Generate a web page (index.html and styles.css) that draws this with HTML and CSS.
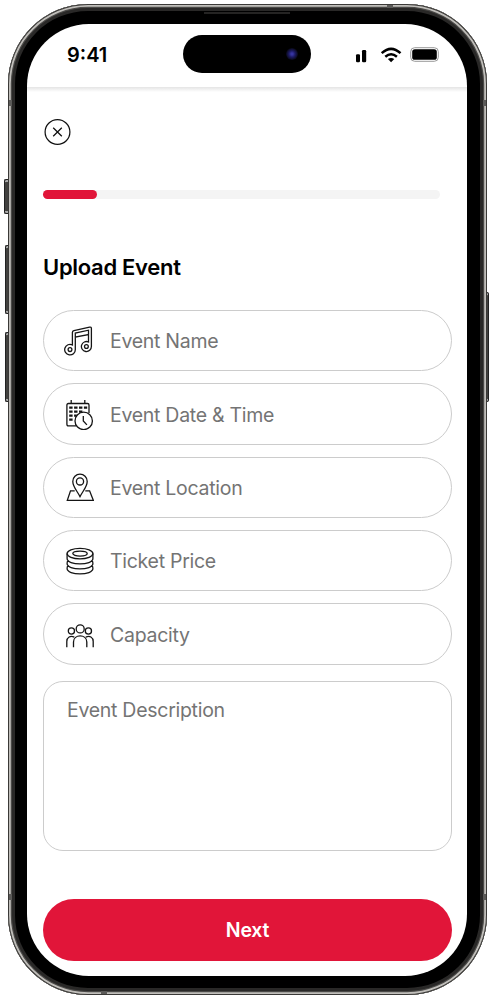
FILE: index.html
```html
<!DOCTYPE html>
<html lang="en">
<head>
<meta charset="utf-8">
<title>Upload Event</title>
<link rel="stylesheet" href="styles.css">
</head>
<body>
<div class="phone">
  <span class="key key-action"></span>
  <span class="key key-up"></span>
  <span class="key key-down"></span>
  <span class="key key-power"></span>
  <div class="frame">
    <span class="speaker"></span>
    <span class="band band-top"></span>
    <span class="band band-bottom"></span>
    <span class="band band-left-top"></span>
    <span class="band band-right-top"></span>
    <span class="band band-left-bottom"></span>
    <span class="band band-right-bottom"></span>
    <div class="screen">
      <header class="status">
        <span class="time">9:41</span>
        <div class="island"><span class="camera"></span></div>
        <svg class="indicators" width="90" height="20" viewBox="0 0 90 20">
          <rect x="3" y="9.2" width="4" height="8" rx="1.2"/>
          <rect x="9" y="5" width="4.2" height="12.2" rx="1.2"/>
          <g fill="none" stroke="#000" stroke-width="2.5">
            <path d="M28.7 8.2Q38.1 -.4 47.5 8.2"/>
            <path d="M32.3 11.7Q38.1 6.7 43.9 11.7"/>
          </g>
          <path d="M34.9 14.1Q38.1 11.7 41.3 14.1L38.1 17.3Z"/>
          <rect x="57.7" y="2.7" width="27.6" height="13.6" rx="4" fill="none" stroke="#999"/>
          <rect x="59.2" y="4.2" width="24.6" height="10.6" rx="2.6"/>
        </svg>
      </header>
      <main class="content">
        <button class="close" aria-label="Close">
          <svg width="28" height="28" viewBox="0 0 28 28"><circle cx="14.5" cy="14" r="12.4"/><path d="M10.2 9.7l8.6 8.6M18.8 9.7l-8.6 8.6"/></svg>
        </button>
        <div class="progress"><div class="progress-value"></div></div>
        <h1 class="title">Upload Event</h1>
        <div class="fields">
          <div class="field">
            <svg class="icon" viewBox="0 0 30 30"><path d="M8.4 18.9V6.5Q8.4 5 9.9 4.7L25.6 1.2Q27.4.8 27.4 2.6V20.5a5 5 0 1 1-2.9-4.5V8.5L11.3 11V23.6a5.3 5.3 0 1 1-2.9-4.7ZM11.3 11V7L24.5 4.2V8.5"/><circle cx="6" cy="23.6" r="1.9"/><circle cx="22.4" cy="20.5" r="1.9"/></svg>
            <span>Event Name</span>
          </div>
          <div class="field">
            <svg class="icon" viewBox="0 0 30 30"><path d="M12.3 25.8H4.4Q2.9 25.8 2.9 24.3V5Q2.9 3.5 4.4 3.5H23.5Q25 3.5 25 5V13M7.2 0V3.5M20.8 0V3.5"/><path d="M5.2 7.6h18M5.2 11.6h13.5M5.2 15.6h7.6M5.2 19.6h4" stroke-width="2.4" stroke-dasharray="3.4 1.5"/><circle cx="19.7" cy="20.9" r="8.7"/><path d="M19.3 15.9v5l3.6 4"/></svg>
            <span>Event Date &amp; Time</span>
          </div>
          <div class="field">
            <svg class="icon" viewBox="0 0 30 30"><path d="M16 23.6C13.5 18.5 8.8 13.7 8.8 8.4a7.2 7.2 0 0 1 14.4 0C23.2 13.7 18.5 18.5 16 23.6Z"/><circle cx="16" cy="8.4" r="3.6"/><path d="M10.7 17.8H6.5L3.3 27.3H29.3L25.6 17.8H21.3"/></svg>
            <span>Event Location</span>
          </div>
          <div class="field">
            <svg class="icon" viewBox="0 0 30 30"><ellipse cx="16" cy="7.6" rx="12.9" ry="5.2"/><ellipse cx="16" cy="7.6" rx="7.2" ry="2.5"/><path d="M3.1 7.6V12.6c0 7 25.8 7 25.8 0V7.6M3.9 14.7Q3.1 15.4 3.1 17.6c0 7 25.8 7 25.8 0Q28.9 15.4 28.1 14.7M3.9 19.7Q3.1 20.4 3.1 22.6c0 7 25.8 7 25.8 0Q28.9 20.4 28.1 19.7"/></svg>
            <span>Ticket Price</span>
          </div>
          <div class="field">
            <svg class="icon" viewBox="0 0 30 30"><circle cx="16.2" cy="8.9" r="4"/><circle cx="7.4" cy="11" r="3.1"/><circle cx="24.4" cy="11" r="3.1"/><path d="M9.5 27.3V22c0-8.2 13.3-8.2 13.3 0v5.3M2.8 27.3V21.6c0-4.4 3.7-6.4 7.5-4.4M29.2 27.3V21.6c0-4.4-3.6-6.4-7.4-4.4"/></svg>
            <span>Capacity</span>
          </div>
          <div class="description">Event Description</div>
        </div>
        <button class="next">Next</button>
      </main>
    </div>
  </div>
</div>
</body>
</html>
```
FILE: styles.css
```css
* { box-sizing: border-box; }
body { margin: 0; background: #fff; font-family: Inter, "Liberation Sans", sans-serif; }
button { font: inherit; border: 0; padding: 0; background: none; }

.phone { position: relative; width: 494px; height: 1000px; padding: 4px 8px 5px; }
.frame {
  position: relative;
  width: 479px;
  height: 991px;
  padding: 20px 20px 19px 19px;
  border-radius: 80px;
  background: #000;
  box-shadow: inset 0 0 0 1px #3a3937, inset 0 0 0 2.8px #c0beba, inset 0 0 0 4px #4a4947, inset 0 0 0 7px #292827;
}
.screen {
  height: 952px;
  border-radius: 62px;
  background: #fff;
  overflow: hidden;
}

.key { position: absolute; background: #42413f; border: 1px solid #222; border-width: 1px 0 1px 1px; border-radius: 2px 0 0 2px; box-shadow: inset 0 3px 0 -1px #aaa, inset 0 -3px 0 -1px #aaa; }
.key-action { left: 4px; top: 179px; width: 5px; height: 35px; }
.key-up { left: 5px; top: 245px; width: 4px; height: 69px; }
.key-down { left: 5px; top: 332px; width: 4px; height: 70px; }
.key-power { left: 486px; top: 292px; width: 3px; height: 110px; border-radius: 0 2px 2px 0; border-width: 1px 1px 1px 0; }
.speaker { position: absolute; left: 196px; top: 8px; width: 86px; height: 2px; background: #252423; }
.band { position: absolute; background: #5b5a58; }
.band-top { left: 379px; top: 1px; width: 6px; height: 3px; }
.band-bottom { left: 93px; bottom: 1px; width: 6px; height: 3px; }
.band-left-top { left: 1px; top: 96px; width: 3px; height: 6px; }
.band-right-top { right: 1px; top: 96px; width: 3px; height: 6px; }
.band-left-bottom { left: 1px; bottom: 95px; width: 3px; height: 6px; }
.band-right-bottom { right: 1px; bottom: 95px; width: 3px; height: 6px; }

.status {
  display: grid;
  grid-template-columns: 156px 128px 1fr;
  align-items: start;
  height: 63px;
  padding-top: 11px;
}
.time { padding: 8px 0 0 40px; font-size: 20px; line-height: 24px; font-weight: 600; }
.island { display: flex; align-items: center; justify-content: flex-end; height: 38px; padding-right: 13px; border-radius: 19px; background: #000; }
.camera { width: 12px; height: 12px; border-radius: 50%; background: radial-gradient(circle, #3634a0 0 1px, #1d1b66 3px, #080815 6px); }
.indicators { justify-self: end; margin: 10px 24px 0 0; }

.content { padding: 31px 15px 0 16px; background: linear-gradient(#e4e4e4, #fff) no-repeat 0 0 / 100% 5px; }
.close { display: block; width: 28px; height: 28px; }
.close svg { display: block; fill: none; stroke: #111; stroke-width: 1.25; }
.progress { width: 397px; height: 9px; margin-top: 44px; border-radius: 5px; background: #f4f4f4; }
.progress-value { width: 54px; height: 9px; border-radius: 5px; background: #e11539; }
.title { margin: 55px 0 29px; font-size: 22px; line-height: 27px; font-weight: 600; letter-spacing: -.3px; }
.fields { display: flex; flex-direction: column; gap: 12px; }
.field {
  display: flex;
  align-items: center;
  gap: 16px;
  height: 61.35px;
  padding: 1px 0 0 20px;
  border: 1px solid #ccc;
  border-radius: 31px;
  color: #747474;
  font-size: 19.5px;
  letter-spacing: -.28px;
}
.icon { width: 30px; height: 30px; fill: none; stroke: #151515; stroke-width: 1.3; }
.description {
  height: 170px;
  margin-top: 4px;
  padding: 16px 23px;
  border: 1px solid #ccc;
  border-radius: 20px;
  color: #747474;
  font-size: 19.5px;
  line-height: 24px;
  letter-spacing: -.28px;
}
.next {
  display: block;
  width: 100%;
  height: 62px;
  margin-top: 48px;
  border-radius: 31px;
  background: #e11539;
  color: #fff;
  font-size: 19.5px;
  font-weight: 600;
  letter-spacing: -.2px;
}
```
